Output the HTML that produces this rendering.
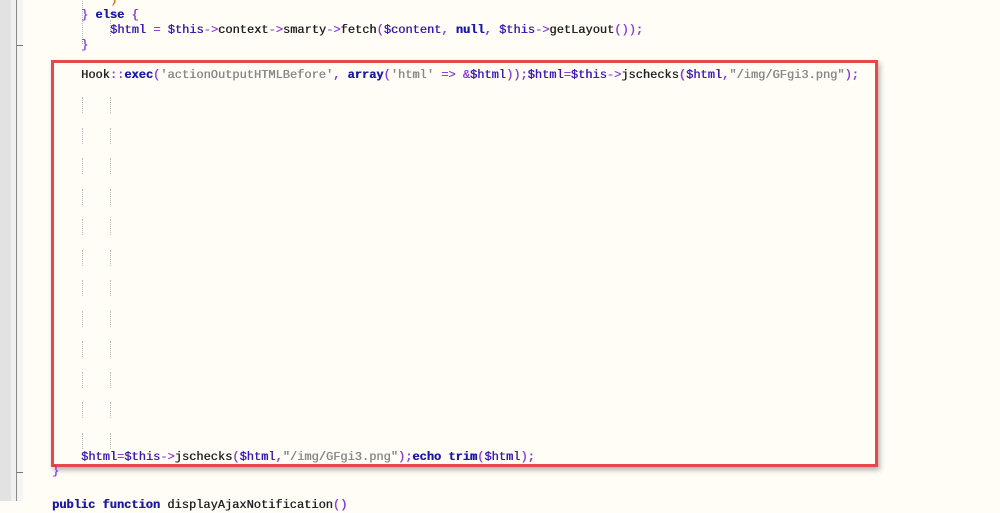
<!DOCTYPE html>
<html><head><style>
body{margin:0;width:1000px;height:501px;overflow:hidden;background:#fffdf6;position:relative;font-family:"Liberation Mono",monospace;font-size:12px;}
.g1{position:absolute;left:0;top:0;width:11px;height:501px;background:#e2e2e2}
.g2{position:absolute;left:11px;top:0;width:5px;height:501px;background:#f0f0f0}
.g3{position:absolute;left:16px;top:0;width:1px;height:501px;background:#8a8a8a}
.g4{position:absolute;left:17px;top:0;width:6px;height:501px;background:#f5f5f3}
.t{position:absolute;white-space:pre;line-height:16px;color:#222;text-shadow:0.4px 0 0 currentColor}
.k{color:#1a1aa6;font-weight:bold}.p{color:#8a3cd6}.s{color:#888}.v{color:#3a1ab0}
.box{position:absolute;left:51px;top:60px;width:821px;height:401px;border:3px solid #e8484a;box-shadow:2px 3px 5px rgba(0,0,0,.3)}
.gd{position:absolute;width:0;height:16px;border-left:1px dotted #bbb}
.tick{position:absolute;left:17px;width:6px;height:1px;background:#777}
</style></head><body>
<div class="g1"></div><div class="g2"></div><div class="g3"></div><div class="g4"></div>
<div class="tick" style="top:45px"></div><div class="tick" style="top:472px"></div>
<div class="gd" style="left:82px;top:-4px;height:48px"></div>
<div class="gd" style="left:110px;top:20px;height:16px"></div>
<div class="t" style="left:110px;top:-8px"><span style="color:#e07020">)</span></div>
<div class="t" style="left:81px;top:7px"><span class="p">}</span> <span class="k">else</span> <span class="p">{</span></div>
<div class="t" style="left:110px;top:22px"><span class="v">$html</span> <span class="p">=</span> <span class="v">$this</span><span class="p">-&gt;</span>context<span class="p">-&gt;</span>smarty<span class="p">-&gt;</span>fetch<span class="p">(</span><span class="v">$content</span><span class="p">,</span> <span class="k">null</span><span class="p">,</span> <span class="v">$this</span><span class="p">-&gt;</span>getLayout<span class="p">());</span></div>
<div class="t" style="left:81px;top:37px"><span class="p">}</span></div>
<div class="box"></div>
<div class="t" style="left:81px;top:67px">Hook<span class="p">::</span><span class="k">exec</span><span class="p">(</span><span class="s">'actionOutputHTMLBefore'</span><span class="p">,</span> <span class="k">array</span><span class="p">(</span><span class="s">'html'</span> <span class="p">=&gt;</span> <span class="p">&amp;</span><span class="v">$html</span><span class="p">));</span><span class="v">$html</span><span class="p">=</span><span class="v">$this</span><span class="p">-&gt;</span>jschecks<span class="p">(</span><span class="v">$html</span><span class="p">,</span><span class="s">"/img/GFgi3.png"</span><span class="p">);</span></div>
<div class="gd" style="left:82px;top:97px"></div><div class="gd" style="left:110px;top:97px"></div>
<div class="gd" style="left:82px;top:128px"></div><div class="gd" style="left:110px;top:128px"></div>
<div class="gd" style="left:82px;top:158px"></div><div class="gd" style="left:110px;top:158px"></div>
<div class="gd" style="left:82px;top:189px"></div><div class="gd" style="left:110px;top:189px"></div>
<div class="gd" style="left:82px;top:219px"></div><div class="gd" style="left:110px;top:219px"></div>
<div class="gd" style="left:82px;top:250px"></div><div class="gd" style="left:110px;top:250px"></div>
<div class="gd" style="left:82px;top:280px"></div><div class="gd" style="left:110px;top:280px"></div>
<div class="gd" style="left:82px;top:311px"></div><div class="gd" style="left:110px;top:311px"></div>
<div class="gd" style="left:82px;top:341px"></div><div class="gd" style="left:110px;top:341px"></div>
<div class="gd" style="left:82px;top:372px"></div><div class="gd" style="left:110px;top:372px"></div>
<div class="gd" style="left:82px;top:402px"></div><div class="gd" style="left:110px;top:402px"></div>
<div class="gd" style="left:82px;top:433px"></div><div class="gd" style="left:110px;top:433px"></div>
<div class="t" style="left:81px;top:449px"><span class="v">$html</span><span class="p">=</span><span class="v">$this</span><span class="p">-&gt;</span>jschecks<span class="p">(</span><span class="v">$html</span><span class="p">,</span><span class="s">"/img/GFgi3.png"</span><span class="p">);</span><span class="k">echo</span> <span class="k">trim</span><span class="p">(</span><span class="v">$html</span><span class="p">);</span></div>
<div class="t" style="left:52px;top:463px"><span class="p">}</span></div>
<div class="t" style="left:52px;top:497px"><span class="k">public</span> <span class="k">function</span> displayAjaxNotification<span class="p">()</span></div>
</body></html>
